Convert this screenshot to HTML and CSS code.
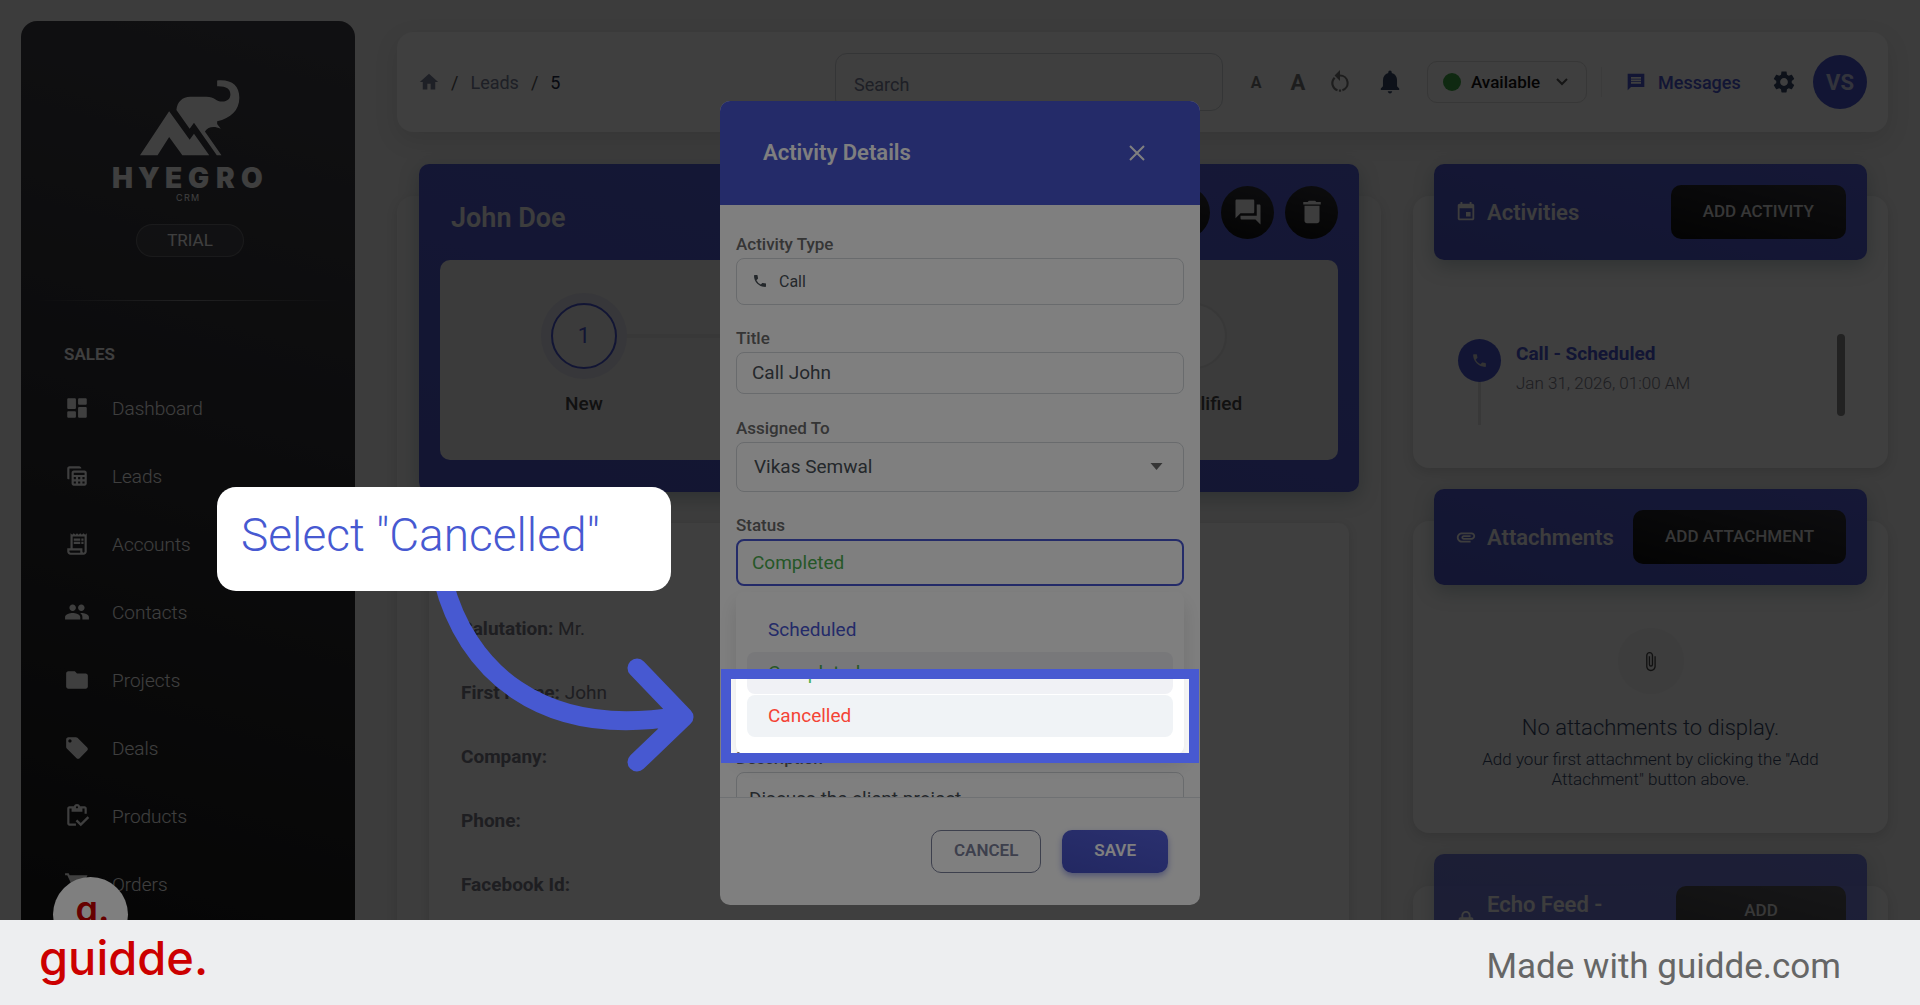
FILE: index.html
```html
<!DOCTYPE html>
<html lang="en">
<head>
  <meta charset="UTF-8">
  <title>Hyegro CRM – Lead</title>
  <link rel="stylesheet" href="styles.css">
</head>
<body>
  <div class="scene">
    <div class="app">
      <aside class="sidebar">
        <div class="brand">
          <svg class="brand-mark" viewBox="424 236 302 230">
            <path d="M424 465L512 332l62 86 13-18 46 65h-81l-40-55-35 55z"/>
            <path d="M534 328C536 304 552 288 576 288h48c26 0 30 15 48 15 17 0 25-9 25-22 0-16-13-25-40-24v-18c44-4 67 16 67 52 0 38-26 62-67 71v9l11 14c-20-9-38-7-48 8l50 72h-14L587 367l-13 18z"/>
          </svg>
          <svg class="wordmark" viewBox="0 0 152 36">
            <text class="wordmark-name" y="21" x="0 26 53 76 104 129">HYEGRO</text>
            <text class="wordmark-sub" y="34" x="64 72 79">CRM</text>
          </svg>
          <span class="plan">TRIAL</span>
        </div>
        <hr class="side-line">
        <h2 class="side-title">SALES</h2>
        <nav class="side-nav">
          <a href="#"><svg class="icon" viewBox="0 0 24 24"><path d="M4 3h6a1 1 0 0 1 1 1v8a1 1 0 0 1-1 1H4a1 1 0 0 1-1-1V4a1 1 0 0 1 1-1zm10 0h6a1 1 0 0 1 1 1v4a1 1 0 0 1-1 1h-6a1 1 0 0 1-1-1V4a1 1 0 0 1 1-1zM4 15h6a1 1 0 0 1 1 1v4a1 1 0 0 1-1 1H4a1 1 0 0 1-1-1v-4a1 1 0 0 1 1-1zm10-4h6a1 1 0 0 1 1 1v8a1 1 0 0 1-1 1h-6a1 1 0 0 1-1-1v-8a1 1 0 0 1 1-1z"/></svg>Dashboard</a>
          <a href="#"><svg class="icon" viewBox="0 0 24 24"><path d="M5 15H4a1 1 0 0 1-1-1V5c0-1.100.9-2 2-2h9c1.100 0 2 .9 2 2v0H5zM19 7H9c-1.100 0-2 .9-2 2v10c0 1.100.9 2 2 2h10c1.100 0 2-.9 2-2V9c0-1.100-.9-2-2-2zm0 2v2H9V9zm-6 6v-2h2v2zm2 2v2h-2v-2zm-4-2H9v-2h2zm6-2h2v2h-2zm-8 4h2v2H9zm8 2v-2h2v2z"/></svg>Leads</a>
          <a href="#"><svg class="icon" viewBox="0 0 24 24"><path d="M19.500 3.500 18 2l-1.500 1.500L15 2l-1.500 1.500L12 2l-1.500 1.500L9 2 7.500 3.500 6 2v14H3v3c0 1.660 1.340 3 3 3h12c1.660 0 3-1.340 3-3V2zM15 20H6c-.55 0-1-.45-1-1v-1h10zm4-1c0 .55-.45 1-1 1s-1-.45-1-1v-3H8V5h11zM9 7h6v2H9zm7 0h2v2h-2zm-7 3h6v2H9zm7 0h2v2h-2z"/></svg>Accounts</a>
          <a href="#"><svg class="icon" viewBox="0 0 24 24"><path d="M16 11c1.660 0 2.990-1.340 2.990-3S17.660 5 16 5s-3 1.340-3 3 1.340 3 3 3zm-8 0c1.660 0 2.990-1.340 2.990-3S9.660 5 8 5 5 6.340 5 8s1.340 3 3 3zm0 2c-2.330 0-7 1.170-7 3.500V19h14v-2.500c0-2.330-4.670-3.500-7-3.500zm8 0c-.29 0-.62.02-.97.05 1.160.84 1.970 1.970 1.970 3.450V19h6v-2.500c0-2.330-4.670-3.500-7-3.500z"/></svg>Contacts</a>
          <a href="#"><svg class="icon" viewBox="0 0 24 24"><path d="M10 4H4c-1.100 0-2 .9-2 2v12c0 1.100.9 2 2 2h16c1.100 0 2-.9 2-2V8c0-1.100-.9-2-2-2h-8z"/></svg>Projects</a>
          <a href="#"><svg class="icon" viewBox="0 0 24 24"><path d="m21.410 11.580-9-9C12.050 2.220 11.550 2 11 2H4c-1.100 0-2 .9-2 2v7c0 .55.22 1.050.59 1.420l9 9c.36.36.86.58 1.410.58s1.050-.22 1.410-.59l7-7c.37-.36.59-.86.59-1.410s-.23-1.060-.59-1.420zM5.500 7C4.670 7 4 6.330 4 5.500S4.670 4 5.500 4 7 4.670 7 5.500 6.330 7 5.500 7z"/></svg>Deals</a>
          <a href="#"><svg class="icon" viewBox="0 0 24 24"><path d="M5 5h2v3h10V5h2v5h2V5c0-1.100-.9-2-2-2h-4.180C14.400 1.840 13.300 1 12 1s-2.400.84-2.820 2H5c-1.100 0-2 .9-2 2v14c0 1.100.9 2 2 2h6v-2H5zm7-2c.55 0 1 .45 1 1s-.45 1-1 1-1-.45-1-1 .45-1 1-1zm9.750 9.250-6.250 6.250-3.250-3.250-1.500 1.500 4.750 4.750 7.750-7.750z"/></svg>Products</a>
          <a href="#"><svg class="icon" viewBox="0 0 24 24"><path d="M7 18c-1.100 0-2 .9-2 2s.9 2 2 2 2-.9 2-2-.9-2-2-2zM1 2v2h2l3.600 7.590-1.350 2.450C4.520 15.370 5.480 17 7 17h12v-2H7.420l1.130-2h7.450c.75 0 1.410-.41 1.750-1.030L21.700 4H5.210l-.94-2zm16 16c-1.100 0-2 .9-2 2s.9 2 2 2 2-.9 2-2-.9-2-2-2z"/></svg>Orders</a>
        </nav>
      </aside>

      <main class="main">
        <header class="topbar">
          <nav class="crumbs">
            <a href="#" aria-label="Home"><svg class="icon-sm" viewBox="0 0 24 24"><path d="M10 21v-7h4v7h5.500v-9H23L12 2 1 12h3.500v9z"/></svg></a>
            <span>/</span><a href="#">Leads</a><span>/</span><b>5</b>
          </nav>
          <input class="search" type="search" placeholder="Search" aria-label="Search">
          <div class="tools">
            <button class="tool size-small" aria-label="Smaller text">A</button>
            <button class="tool size-large" aria-label="Larger text">A</button>
            <button class="tool" aria-label="Reset"><svg class="icon" viewBox="0 0 24 24"><path d="M12 1v4a8 8 0 0 1 2.500 15.600l-.6-1.900A6 6 0 0 0 12 7v4L7 6zM6.300 7.300l1.500 1.400A6 6 0 0 0 10 18.700l-.6 1.900A8 8 0 0 1 6.300 7.300zM11 19h2v2h-2z"/></svg></button>
            <button class="tool dark" aria-label="Notifications"><svg class="icon" viewBox="0 0 24 24"><path d="M12 22.500c1.100 0 2-.9 2-2h-4c0 1.100.9 2 2 2zm6.500-6.500v-5.500c0-3.300-1.700-6-4.900-6.800V3a1.600 1.600 0 0 0-3.200 0v.7c-3.200.8-4.900 3.500-4.900 6.800V16l-2 2v1.300h17V18z"/></svg></button>
            <button class="presence"><i class="dot"></i>Available<svg class="chevron" viewBox="0 0 12 8"><path d="M1 1l5 5 5-5"/></svg></button>
            <span class="tool-line"></span>
            <a class="messages" href="#"><svg class="icon-sm" viewBox="0 0 24 24"><path d="M20 2H2v20l4-4h16V2zm-2 12H6v-2h12zm0-3H6V9h12zm0-3H6V6h12z"/></svg>Messages</a>
            <button class="tool dark" aria-label="Settings"><svg class="icon" viewBox="0 0 24 24"><path d="M19.140 12.940c.04-.3.060-.61.060-.94 0-.32-.02-.64-.07-.94l2.030-1.580c.18-.14.23-.41.120-.61l-1.920-3.320c-.12-.22-.37-.29-.59-.22l-2.390.96c-.5-.38-1.030-.7-1.620-.94l-.36-2.540c-.04-.24-.24-.41-.48-.41h-3.840c-.24 0-.43.17-.47.41l-.36 2.540c-.59.24-1.130.57-1.620.94l-2.390-.96c-.22-.08-.47 0-.59.22L2.740 8.870c-.12.21-.08.47.12.61l2.030 1.580c-.05.3-.09.63-.09.94s.02.64.07.94l-2.030 1.580c-.18.14-.23.41-.12.61l1.920 3.320c.12.22.37.29.59.22l2.390-.96c.5.38 1.030.7 1.620.94l.36 2.540c.05.24.24.41.48.41h3.840c.24 0 .44-.17.47-.41l.36-2.540c.59-.24 1.130-.56 1.620-.94l2.390.96c.22.08.47 0 .59-.22l1.920-3.320c.12-.22.07-.47-.12-.61zM12 15.600c-1.980 0-3.600-1.620-3.600-3.600s1.620-3.600 3.600-3.600 3.600 1.620 3.600 3.600-1.620 3.600-3.600 3.600z"/></svg></button>
            <button class="avatar">VS</button>
          </div>
        </header>

        <div class="columns">
          <section class="card lead">
            <div class="lead-head">
              <div class="lead-title">
                <h1>John Doe</h1>
                <div class="rounds">
                  <button class="round" aria-label="Edit"></button>
                  <button class="round" aria-label="Comments"><svg viewBox="0 0 24 24"><path d="M21 6h-2v9H6v2c0 .55.45 1 1 1h11l4 4V7c0-.55-.45-1-1-1zm-4 6V3c0-.55-.45-1-1-1H3c-.55 0-1 .45-1 1v14l4-4h10c.55 0 1-.45 1-1z"/></svg></button>
                  <button class="round" aria-label="Delete"><svg viewBox="0 0 24 24"><path d="M6 19c0 1.100.9 2 2 2h8c1.100 0 2-.9 2-2V7H6zM19 4h-3.500l-1-1h-5l-1 1H5v2h14z"/></svg></button>
                </div>
              </div>
              <div class="steps">
                <div class="step current"><span class="bubble">1</span>New</div>
                <div class="step"><span class="bubble"></span>Unqualified</div>
              </div>
            </div>
            <div class="details">
              <p><b>Salutation:</b> Mr.</p>
              <p><b>First Name:</b> John</p>
              <p><b>Company:</b></p>
              <p><b>Phone:</b></p>
              <p><b>Facebook Id:</b></p>
            </div>
          </section>

          <div class="side-cards">
            <section class="card">
              <div class="card-head">
                <svg class="head-icon" viewBox="0 0 24 24"><path d="M17 12h-5v5h5zM16 1v2H8V1H6v2H5c-1.110 0-2 .9-2 2v14c0 1.100.89 2 2 2h14c1.100 0 2-.9 2-2V5c0-1.100-.9-2-2-2h-1V1zm3 18H5V8h14z"/></svg>
                <h2>Activities</h2>
                <button class="add">ADD ACTIVITY</button>
              </div>
              <div class="timeline">
                <span class="marker"><i><svg viewBox="0 0 24 24"><path d="M20 15.500c-1.250 0-2.450-.2-3.570-.57a1 1 0 0 0-1.020.24l-2.200 2.200a15 15 0 0 1-6.590-6.590l2.200-2.200a1 1 0 0 0 .25-1.020A11.400 11.400 0 0 1 8.500 4c0-.55-.45-1-1-1H4c-.55 0-1 .45-1 1a17 17 0 0 0 17 17c.55 0 1-.45 1-1v-3.500c0-.55-.45-1-1-1z"/></svg></i></span>
                <div class="entry">
                  <a href="#">Call - Scheduled</a>
                  <time>Jan 31, 2026, 01:00 AM</time>
                </div>
                <span class="scroll"></span>
              </div>
            </section>

            <section class="card">
              <div class="card-head">
                <svg class="head-icon" viewBox="0 0 24 24"><path d="M2 12.500C2 9.460 4.460 7 7.500 7H18c2.210 0 4 1.790 4 4s-1.790 4-4 4H9.500C8.120 15 7 13.880 7 12.500S8.120 10 9.500 10H17v2H9.410c-.55 0-.55 1 0 1H18c1.100 0 2-.9 2-2s-.9-2-2-2H7.500C5.570 9 4 10.570 4 12.500S5.570 16 7.500 16H17v2H7.500C4.460 18 2 15.540 2 12.500z"/></svg>
                <h2>Attachments</h2>
                <button class="add">ADD ATTACHMENT</button>
              </div>
              <div class="empty">
                <span class="empty-icon"><svg viewBox="0 0 24 24"><path d="M16.500 6v11.500c0 2.210-1.790 4-4 4s-4-1.790-4-4V5a2.500 2.500 0 0 1 5 0v10.500c0 .55-.45 1-1 1s-1-.45-1-1V6H10v9.500a2.500 2.500 0 0 0 5 0V5c0-2.210-1.790-4-4-4S7 2.790 7 5v12.500c0 3.040 2.460 5.500 5.500 5.500s5.500-2.460 5.500-5.500V6z"/></svg></span>
                <h3>No attachments to display.</h3>
                <p>Add your first attachment by clicking the "Add Attachment" button above.</p>
              </div>
            </section>

            <section class="card">
              <div class="card-head loading">
                <svg class="head-icon" viewBox="0 0 24 24"><path d="M18 8h-1V6c0-2.760-2.240-5-5-5S7 3.240 7 6v2H6c-1.100 0-2 .9-2 2v10c0 1.100.9 2 2 2h12c1.100 0 2-.9 2-2V10c0-1.100-.9-2-2-2zM9 6c0-1.660 1.340-3 3-3s3 1.340 3 3v2H9z"/></svg>
                <h2>Echo Feed -</h2>
                <button class="add">ADD</button>
              </div>
            </section>
          </div>
        </div>
      </main>
    </div>

    <div class="backdrop">
      <form class="modal">
        <header class="modal-head">
          <h2>Activity Details</h2>
          <button type="button" class="close" aria-label="Close"><svg viewBox="0 0 16 16"><path d="M1 1l14 14M15 1L1 15"/></svg></button>
        </header>
        <div class="modal-body">
          <label for="type">Activity Type</label>
          <div class="field type">
            <svg viewBox="0 0 24 24"><path d="M20 15.500c-1.250 0-2.450-.2-3.570-.57a1 1 0 0 0-1.020.24l-2.200 2.200a15 15 0 0 1-6.590-6.590l2.200-2.200a1 1 0 0 0 .25-1.020A11.400 11.400 0 0 1 8.500 4c0-.55-.45-1-1-1H4c-.55 0-1 .45-1 1a17 17 0 0 0 17 17c.55 0 1-.45 1-1v-3.500c0-.55-.45-1-1-1z"/></svg>
            <select id="type"><option>Call</option></select>
          </div>
          <label for="title">Title</label>
          <div class="field title"><input id="title" type="text" value="Call John"></div>
          <label for="assigned">Assigned To</label>
          <div class="field assigned">
            <select id="assigned"><option>Vikas Semwal</option></select>
            <svg class="caret" viewBox="0 0 12 7"><path d="M0 0h12L6 7z"/></svg>
          </div>
          <label for="status">Status</label>
          <div class="field status">
            <select id="status"><option>Completed</option></select>
            <ul class="options" role="listbox">
              <li class="scheduled" role="option">Scheduled</li>
              <li class="completed" role="option">Completed</li>
              <li class="cancelled" role="option">Cancelled</li>
            </ul>
          </div>
          <label for="description">Description</label>
          <div class="field description"><textarea id="description">Discuss the client project</textarea></div>
        </div>
        <footer class="modal-foot">
          <button type="button" class="btn">CANCEL</button>
          <button type="button" class="btn save">SAVE</button>
        </footer>
      </form>
    </div>

    <button class="launcher" aria-label="guidde">g.</button>
    <div class="spotlight"></div>
    <svg class="arrow" viewBox="0 0 270 200"><path d="M14 0C36 88 110 160 250 136M208 88l47 49-47 45"/></svg>
    <div class="callout">Select "Cancelled"</div>
  </div>

  <footer class="credit">
    <a class="guidde" href="#">guidde.</a>
    <a class="made" href="#">Made with guidde.com</a>
  </footer>
</body>
</html>
```
FILE: styles.css
```css
* {
  box-sizing: border-box;
}
body {
  margin: 0;
  height: 100vh;
  display: flex;
  flex-direction: column;
  overflow: hidden;
  position: relative;
  font-family: Roboto, sans-serif;
  font-size: 18px;
  color: #344767;
  background: #f0f0f0;
}
h1, h2, h3, p, ul {
  margin: 0;
  padding: 0;
}
a {
  color: inherit;
  text-decoration: none;
}
button, input, select, textarea {
  font: inherit;
  color: inherit;
  background: none;
  border: 0;
  padding: 0;
  margin: 0;
}
select {
  appearance: none;
}
svg {
  fill: currentColor;
  flex: none;
}
.icon {
  width: 26px;
  height: 26px;
}
.icon-sm {
  width: 20px;
  height: 20px;
}

/* page frame */
.scene {
  flex: 1;
  min-height: 0;
  overflow: hidden;
}
.app {
  display: flex;
  height: 100%;
}
.sidebar {
  width: 334px;
  flex: none;
  margin: 21px 0 0 21px;
  border-radius: 16px 16px 0 0;
  background: linear-gradient(195deg, #42424a, #191919);
  color: #fff;
  overflow: hidden;
}
.main {
  flex: 1;
  min-width: 0;
  padding: 32px 32px 0 42px;
}

/* sidebar */
.brand {
  display: flex;
  flex-direction: column;
  align-items: center;
  padding: 58px 0 0 4px;
}
.brand-mark {
  width: 100px;
  height: 77px;
}
.wordmark {
  width: 152px;
  height: 36px;
  margin: 11px 4px 0 0;
  overflow: visible;
}
.wordmark-name {
  font: 900 28px Inter, sans-serif;
}
.wordmark-sub {
  font: 9px Inter, sans-serif;
}
.plan {
  margin-top: 21px;
  width: 108px;
  line-height: 31px;
  text-align: center;
  font-size: 17px;
  font-weight: 400;
  border: 1px solid rgba(255,255,255,0.2);
  border-radius: 17px;
  background: rgba(255,255,255,0.08);
}
.side-line {
  height: 1px;
  border: 0;
  margin: 43px 16px 0;
  background: linear-gradient(90deg, transparent, rgba(255,255,255,0.4), transparent);
}
.side-title {
  margin: 43px 0 10px 43px;
  font-size: 17px;
  line-height: 20px;
  font-weight: 600;
}
.side-nav a {
  display: flex;
  align-items: center;
  height: 68px;
  padding-left: 43px;
  gap: 22px;
  font-size: 19px;
  font-weight: 300;
}

/* top bar */
.topbar {
  display: flex;
  align-items: center;
  height: 100px;
  padding: 0 21px 0 22px;
  border-radius: 16px;
  background: #fcfcfc;
  box-shadow: 0 8px 24px rgba(0,0,0,0.1);
}
.crumbs {
  display: flex;
  align-items: center;
  flex: 1;
  gap: 12px;
  color: #555;
}
.crumbs a {
  display: flex;
  color: #7b809a;
}
.crumbs b {
  font-weight: 400;
  color: #222b45;
}
.search {
  width: 388px;
  height: 58px;
  padding: 4px 18px 0;
  border: 1px solid #d2d6da;
  border-radius: 12px;
}
.search::placeholder {
  color: #7b809a;
}
.tools {
  display: flex;
  align-items: center;
  width: 644px;
  padding-left: 18px;
}
.tool {
  display: flex;
  justify-content: center;
  flex: none;
  width: 42px;
  color: #777;
  font-weight: 700;
}
.dark {
  width: 58px;
  color: #344767;
}
.size-small {
  width: 30px;
  margin-right: 6px;
  font-size: 16px;
}
.size-large {
  font-size: 22px;
}
.presence {
  display: flex;
  align-items: center;
  gap: 10px;
  width: 160px;
  height: 42px;
  padding: 0 18px 0 15px;
  margin-left: 8px;
  border: 1px solid #ddd;
  border-radius: 10px;
  font-weight: 500;
  font-size: 17px;
  color: #111;
}
.dot {
  width: 18px;
  height: 18px;
  border-radius: 50%;
  background: #3da544;
}
.chevron {
  width: 12px;
  height: 8px;
  margin-left: auto;
  fill: none;
  stroke: #555;
  stroke-width: 2;
}
.tool-line {
  width: 1px;
  height: 30px;
  margin: 0 24px 0 14px;
  background: #eee;
}
.messages {
  display: flex;
  align-items: center;
  gap: 12px;
  margin-right: auto;
  color: #4856d2;
  font-weight: 500;
}
.avatar {
  width: 54px;
  height: 54px;
  border-radius: 50%;
  background: #4856d2;
  color: #cfd3f0;
  font-size: 22px;
  font-weight: 700;
}

/* cards */
.columns {
  display: flex;
  gap: 32px;
  padding-top: 64px;
}
.card {
  border-radius: 16px;
  background: #fcfcfc;
  box-shadow: 0 4px 12px rgba(0,0,0,0.12);
}
.lead {
  flex: 1;
  min-width: 0;
  height: 800px;
  padding: 0 22px;
  background: #f4f4f4;
}
.lead-head, .card-head {
  margin-top: -32px;
  border-radius: 10px;
  background: linear-gradient(195deg, #5560da, #4c56c8);
  color: #f4f4f4;
  box-shadow: 0 6px 20px rgba(0,50,60,0.25);
}
.lead-head {
  height: 328px;
  padding: 21px;
}
.lead-title {
  display: flex;
  align-items: center;
  justify-content: space-between;
  height: 54px;
  padding-left: 11px;
}
.lead-title h1 {
  padding-top: 12px;
  font-size: 27px;
  font-weight: 600;
}
.rounds {
  display: flex;
  gap: 11px;
}
.round {
  display: grid;
  place-items: center;
  width: 53px;
  height: 53px;
  border-radius: 50%;
  background: linear-gradient(195deg, #33333a, #101010);
}
.round svg {
  width: 30px;
  height: 30px;
}
.steps {
  display: flex;
  justify-content: space-between;
  position: relative;
  height: 200px;
  margin-top: 21px;
  padding: 43px 44px 0;
  border-radius: 10px;
  background: #ececec;
}
.step {
  display: flex;
  flex-direction: column;
  align-items: center;
  width: 200px;
  gap: 23px;
  font-size: 19px;
  font-weight: 500;
  line-height: 24px;
  color: #444;
}
.steps::before {
  content: "";
  position: absolute;
  left: 180px;
  right: 180px;
  top: 74px;
  height: 4px;
  background: #e0e0e0;
}
.bubble {
  display: grid;
  place-items: center;
  position: relative;
  width: 66px;
  height: 66px;
  border: 2px solid #e0e0e0;
  border-radius: 50%;
  background: #f4f4f4;
  font-size: 22px;
  font-weight: 400;
}
.current .bubble {
  border-color: #4856d2;
  background: #ececec;
  color: #4856d2;
  box-shadow: 0 0 0 10px #dcdcea;
}
.details {
  height: 500px;
  margin: 31px 10px 0;
  padding: 90px 32px 0;
  border-radius: 10px;
  background: #fcfcfc;
  box-shadow: 0 2px 10px rgba(0,0,0,0.12);
  font-size: 19px;
  color: #7b7b86;
}
.details p {
  line-height: 32px;
  margin-bottom: 32px;
}
.details b {
  font-weight: 700;
}

.side-cards {
  display: flex;
  flex-direction: column;
  flex: none;
  gap: 53px;
  width: 475px;
}
.side-cards .card {
  padding: 0 21px;
}
.card-head {
  display: flex;
  align-items: center;
  height: 96px;
  padding: 0 21px;
  gap: 10px;
}
.card-head h2 {
  flex: 1;
  font-size: 22px;
  font-weight: 600;
}
.head-icon {
  width: 22px;
  height: 22px;
}
.add {
  height: 54px;
  padding: 0 32px 2px;
  border-radius: 10px;
  background: linear-gradient(195deg, #33333a, #101010);
  color: #ddd;
  font-size: 17px;
  font-weight: 500;
}
.loading {
  align-items: flex-start;
  height: 140px;
  padding-top: 32px;
  opacity: 0.8;
}
.loading h2 {
  line-height: 38px;
}
.loading .head-icon {
  margin-top: 24px;
}
.loading .add {
  width: 170px;
  padding-bottom: 6px;
}
.timeline {
  display: flex;
  padding: 74px 22px 43px 24px;
}
.marker {
  width: 43px;
  height: 91px;
  background: linear-gradient(#e0e0e0, #e0e0e0) center / 3px 100% no-repeat;
}
.marker i {
  display: grid;
  place-items: center;
  width: 43px;
  height: 43px;
  margin-top: 5px;
  border-radius: 50%;
  background: #4856d2;
  box-shadow: 0 -5px 0 #fcfcfc;
  color: #ccc;
}
.marker svg {
  width: 17px;
  height: 17px;
}
.entry {
  flex: 1;
  padding: 8px 0 0 15px;
}
.entry a {
  display: block;
  line-height: 24px;
  color: #4856d2;
  font-weight: 700;
  font-size: 19px;
}
.entry time {
  display: block;
  margin-top: 5px;
  line-height: 24px;
  font-size: 17px;
  font-weight: 300;
  color: #7b7b86;
}
.scroll {
  width: 8px;
  height: 82px;
  border-radius: 4px;
  background: #888;
}
.empty {
  display: flex;
  flex-direction: column;
  align-items: center;
  padding: 43px 40px 44px;
  text-align: center;
  font-weight: 300;
}
.empty-icon {
  display: grid;
  place-items: center;
  width: 66px;
  height: 66px;
  border-radius: 50%;
  background: #f4f4f4;
  color: #444;
}
.empty-icon svg {
  width: 21px;
  height: 21px;
}
.empty h3 {
  margin: 20px 0 7px;
  font-size: 22px;
  line-height: 28px;
  font-weight: 300;
}
.empty p {
  font-size: 17px;
  line-height: 20px;
}

/* modal */
.backdrop {
  position: absolute;
  inset: 0;
  isolation: isolate;
  display: grid;
  place-items: center;
  background: rgba(0,0,0,0.5);
}
.modal {
  display: flex;
  flex-direction: column;
  width: 480px;
  height: 80vh;
  border-radius: 10px;
  overflow: hidden;
  background: #fff;
}
.modal-head {
  display: flex;
  align-items: center;
  justify-content: space-between;
  height: 104px;
  flex: none;
  padding: 0 55px 0 43px;
  background: #4856d2;
  color: #fff;
}
.modal-head h2 {
  font-size: 22px;
  font-weight: 600;
}
.close {
  display: flex;
}
.close svg {
  width: 16px;
  height: 16px;
  stroke: currentColor;
  stroke-width: 2;
}
.modal-body {
  flex: 1;
  min-height: 0;
  overflow: hidden;
  padding: 31px 16px 0;
  font-size: 19px;
  color: #495057;
}
.modal-body label {
  display: block;
  margin-bottom: 6px;
  font-size: 17px;
  line-height: 16px;
  font-weight: 500;
  color: #6a6a6a;
}
.field {
  display: flex;
  align-items: center;
  position: relative;
  height: 47px;
  margin-bottom: 25px;
  padding: 0 15px;
  border: 1px solid #d2d6da;
  border-radius: 8px;
}
.field input, .field select, .field textarea {
  flex: 1;
  outline: 0;
  resize: none;
}
.type {
  gap: 11px;
  font-size: 16px;
}
.type svg {
  width: 16px;
  height: 16px;
}
.title {
  height: 42px;
  margin-bottom: 26px;
}
.assigned {
  height: 50px;
  padding: 0 20px 0 17px;
}
.caret {
  width: 13px;
  height: 7px;
  color: #6a6a6a;
}
.status {
  padding: 0 14px;
  border: 2px solid #4856d2;
  margin-bottom: 164px;
  color: #4caf50;
}
.options {
  position: absolute;
  left: -2px;
  right: -2px;
  top: 51px;
  display: grid;
  gap: 1px;
  z-index: 1;
  padding: 17px 11px;
  list-style: none;
  background: #fff;
  border-radius: 8px;
  box-shadow: 0 10px 20px rgba(0,0,0,0.12);
}
.options li {
  padding-left: 21px;
  line-height: 42px;
  border-radius: 8px;
}
.scheduled {
  color: #4856d2;
}
.completed {
  background: #f0f1f5;
}
.cancelled {
  background: #f0f3f6;
  color: #f44335;
}
.description {
  height: 120px;
  padding: 14px 12px;
}
.description textarea {
  height: 100%;
}
.modal-foot {
  display: flex;
  justify-content: flex-end;
  gap: 21px;
  flex: none;
  padding: 32px;
  border-top: 1px solid #dee2e6;
}
.btn {
  height: 43px;
  padding: 0 22px 2px;
  border: 1px solid #7b809a;
  border-radius: 10px;
  font-size: 17px;
  font-weight: 600;
  color: #7b809a;
}
.save {
  padding: 0 32px 2px;
  border: 0;
  background: linear-gradient(195deg, #5561de, #4550c4);
  box-shadow: 0 3px 6px rgba(72,86,210,0.5);
  color: #fff;
}

/* guide overlay */
.launcher {
  position: absolute;
  left: 53px;
  top: 877px;
  width: 75px;
  height: 75px;
  padding: 0 0 12px 4px;
  border-radius: 50%;
  background: #fff;
  color: #c00;
  font: 600 36px Inter, sans-serif;
}
.spotlight {
  position: absolute;
  left: calc(50% - 229px);
  top: 679px;
  width: 458px;
  height: 74px;
  box-shadow: 0 0 0 4000px rgba(0,0,0,0.5);
}
.spotlight::after {
  content: "";
  position: absolute;
  inset: -10px;
  border: 10px solid #4759d1;
}
.arrow {
  position: absolute;
  left: 429px;
  top: 580px;
  width: 270px;
  height: 200px;
  fill: none;
  stroke: #4759d1;
  stroke-width: 19;
  stroke-linecap: round;
  stroke-linejoin: round;
}
.callout {
  position: absolute;
  left: 217px;
  top: 487px;
  width: 454px;
  height: 104px;
  padding: 20px 24px;
  border-radius: 19px;
  background: #fff;
  color: #4759d1;
  font: 350 46px/56px Roboto, sans-serif;
}

/* bottom strip */
.credit {
  display: flex;
  align-items: center;
  justify-content: space-between;
  position: relative;
  z-index: 2;
  height: 85px;
  flex: none;
  padding: 0 79px 0 39px;
  background: #edeef0;
}
.guidde {
  padding-bottom: 10px;
  color: #c00;
  font: 500 47px/60px Inter, sans-serif;
}
.made {
  padding-top: 7px;
  color: #666;
  font-size: 35px;
}
```
